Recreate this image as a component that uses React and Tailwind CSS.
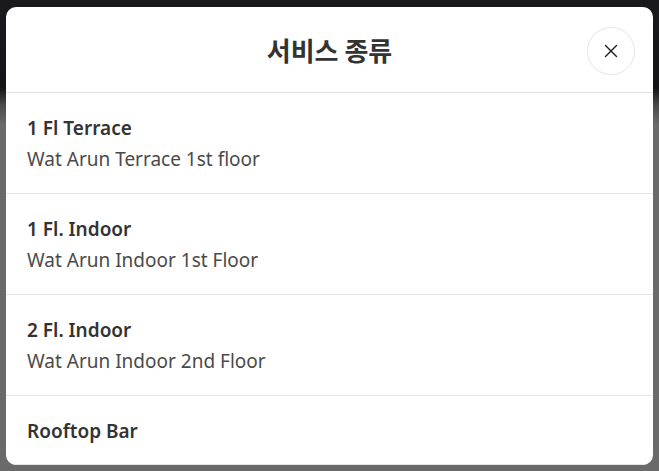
import { X } from "lucide-react";

const options = [
    { name: "1 Fl Terrace", desc: "Wat Arun Terrace 1st floor" },
    { name: "1 Fl. Indoor", desc: "Wat Arun Indoor 1st Floor" },
    { name: "2 Fl. Indoor", desc: "Wat Arun Indoor 2nd Floor" },
    { name: "Rooftop Bar" },
];

export default function App() {
    return (
        <div
            className="h-screen w-full overflow-hidden bg-[linear-gradient(to_bottom,#1a1a1c_0px,#151517_88px,#4a4a4a_105px,#6a6a6a_125px,#6a6a6a_100%)] px-[6px] pt-[7px] font-['Noto_Sans','Noto_Sans_CJK_KR',sans-serif]"
        >
            <div className="h-[458px] overflow-hidden rounded-[10px] bg-white">
                {/* Header */}
                <header className="grid h-[86px] grid-cols-[48px_1fr_48px] items-center border-b border-[#e3e3e3] px-[18px]">
                    <div />
                    <h1 className="text-center text-[26px] font-bold text-[#333] font-['Noto_Sans_CJK_KR',sans-serif]">
                        서비스 종류
                    </h1>
                    <button className="mt-[3px] flex h-[48px] w-[48px] items-center justify-center rounded-full border border-[#e6e6e6] text-[#222]">
                        <X className="h-[22px] w-[22px]" strokeWidth={1.5} />
                    </button>
                </header>

                {/* Options */}
                <ul>
                    {options.map((o) => (
                        <li
                            key={o.name}
                            className="border-b border-[#e6e6e6] px-[21px] pt-[21px] pb-[19px]"
                        >
                            <div className="text-[19px] font-semibold leading-[28px] text-[#333]">
                                {o.name}
                            </div>
                            {o.desc && (
                                <div className="mt-[2px] text-[19px] leading-[30px] text-[#4a4a4a]">
                                    {o.desc}
                                </div>
                            )}
                        </li>
                    ))}
                </ul>
            </div>
        </div>
    );
}
